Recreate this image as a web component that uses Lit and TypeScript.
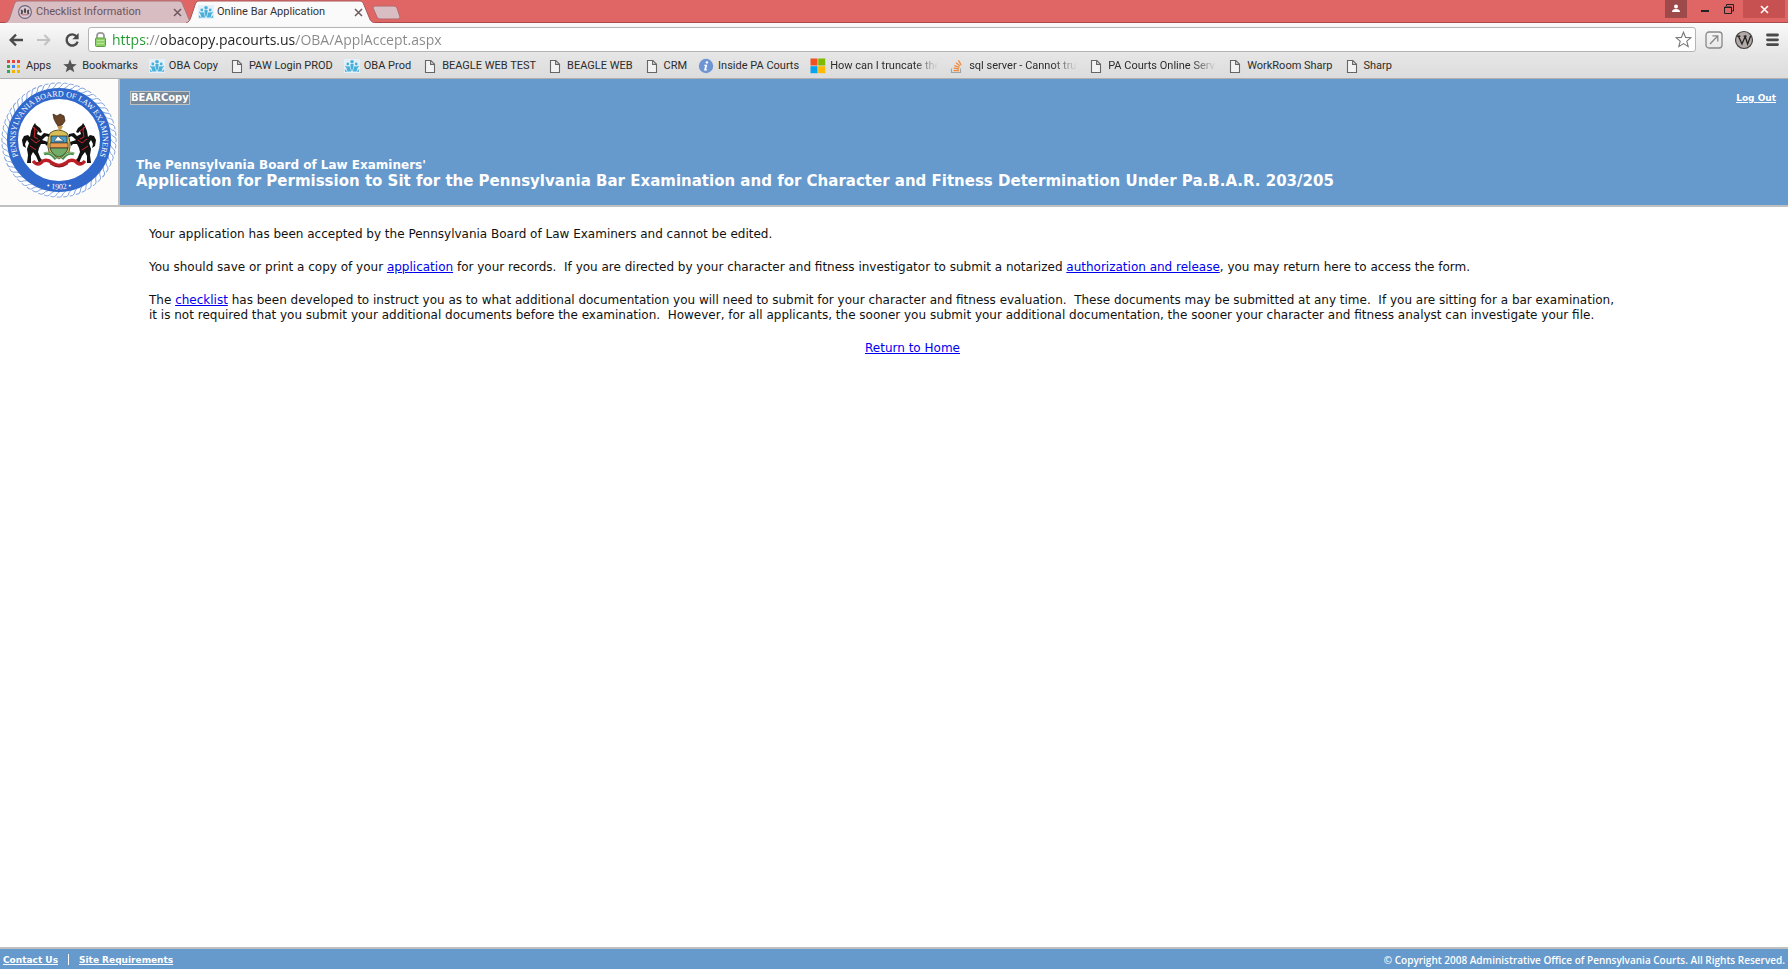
import { LitElement, html, svg, css } from "lit";
import { customElement, property } from "lit/decorators.js";

type IconName = "apps" | "star" | "people" | "doc" | "info" | "ms" | "stack" | "crest";

const people = svg`
  <rect y="1" width="16" height="14" fill="#e4f1f9"/>
  <g fill="#49b0dc">
    <circle cx="8" cy="3.8" r="1.8"/><circle cx="3.8" cy="6" r="1.4"/><circle cx="12.2" cy="6" r="1.4"/>
    <path d="M6.4 6 H9.6 L9.4 9.5 L8 13.6 L6.6 9.5Z"/>
    <path d="M.6 7.6 L3 8.4 L5.6 8.2 L7.2 13.6 H3.4 L2.6 10.6Z M15.4 7.6 L13 8.4 L10.4 8.2 L8.8 13.6 H12.6 L13.4 10.6Z"/>
    <path d="M.8 11 L3.4 13.8 H1Z M15.2 11 L12.6 13.8 H15Z"/>
  </g>`;

const dots = ["#e8453c", "#e8453c", "#e8453c", "#30a852", "#4285f4", "#f5b400", "#30a852", "#f5b400", "#f5b400"];

const icons: Record<IconName, unknown> = {
  apps: dots.map((c, i) => svg`<rect x=${1 + (i % 3) * 5} y=${2 + Math.floor(i / 3) * 5} width="3" height="3" fill=${c}/>`),
  star: svg`<path fill="#555" d="M8 1.2 L9.8 6 L14.8 6.2 L10.9 9.3 L12.3 14.2 L8 11.4 L3.7 14.2 L5.1 9.3 L1.2 6.2 L6.2 6Z"/>`,
  people,
  doc: svg`<path fill="#f3f3f3" stroke="#666" stroke-width="1.1" d="M3.5 2.5 H8.8 L12.5 6.2 V14.5 H3.5Z"/><path fill="none" stroke="#666" stroke-width="1.1" d="M8.6 2.5 V6.4 H12.5"/>`,
  info: svg`<circle cx="8" cy="8" r="7.2" fill="#6e94d4"/><circle cx="8.9" cy="4.4" r="1.2" fill="#fff"/><path fill="#fff" d="M6.2 6.8 H9.3 L8.1 11.6 L9.3 11.4 L9 12.4 H6 L7.2 7.8 H6Z"/>`,
  ms: svg`<rect x=".5" y=".5" width="7" height="7" fill="#f25022"/><rect x="8.2" y=".5" width="7" height="7" fill="#7fba00"/><rect x=".5" y="8.2" width="7" height="7" fill="#00a4ef"/><rect x="8.2" y="8.2" width="7" height="7" fill="#ffb900"/>`,
  stack: svg`<path fill="none" stroke="#9aa5ad" stroke-width="1.1" d="M2.5 10.5 V14.5 H11.5 V10.5"/><path fill="none" stroke="#f08a3c" stroke-width="1.3" d="M4.5 12.6 H10 M4.6 10.2 L10 11 M5.3 7.6 L10.4 9.4 M7 4.8 L11.2 8 M9.4 2.4 L12.2 7"/>`,
  crest: svg`<circle cx="8" cy="8" r="6.4" fill="#dccbd0" stroke="#6a6580" stroke-width="1.1"/><g fill="#54464f"><path d="M3.6 5.6 L5.6 6 L6 8 L5.4 10.4 L3.6 10 L4.2 8Z M12.4 5.6 L10.4 6 L10 8 L10.6 10.4 L12.4 10 L11.8 8Z"/><path d="M7 4.4 H9 L9.2 8 L8 9.4 L6.8 8Z"/></g><path stroke="#b0606c" stroke-width=".9" d="M5 10.8 H11"/>`,
};

@customElement("site-icon")
export class SiteIcon extends LitElement {
  @property() name: IconName = "doc";
  static styles = css`
    :host { display: block; flex: none; width: 16px; height: 16px; }
    svg { display: block; }
  `;
  render() {
    return html`<svg width="16" height="16" viewBox="0 0 16 16" aria-hidden="true">${icons[this.name]}</svg>`;
  }
}

@customElement("browser-tab")
export class BrowserTab extends LitElement {
  @property() label = "";
  @property() icon: IconName = "doc";
  @property({ type: Boolean, reflect: true }) active = false;
  static styles = css`
    :host { display: block; position: relative; width: 184px; height: 23px; margin-right: -3px; color: #6b5559; }
    :host([active]) { z-index: 1; color: #333; }
    .shape { position: absolute; inset: 0 -5px 0 0; width: 189px; height: 23px; fill: #d8bdc3; stroke: #a8747a; }
    :host([active]) .shape { fill: #fafafa; stroke: #a8585a; }
    .row { position: relative; display: flex; align-items: center; gap: 3px; height: 23px; padding: 1px 7px 0 12px; box-sizing: border-box; }
    .label { flex: 1; border: 0; padding: 0; background: none; color: inherit; font: 11px/16px Roboto, sans-serif; text-align: left; white-space: nowrap; }
    .close { display: flex; border: 0; padding: 0; background: none; color: #6e5a5e; }
  `;
  render() {
    return html`
      <svg class="shape" viewBox="0 0 189 23" aria-hidden="true"><path d="M0 23 C3 22 4 20 5 17 L9 5 C10 2 11 1 13 1 H174 C176 1 177 2 178 5 L183 17 C184 20 185 22 189 23"/></svg>
      <div class="row">
        <site-icon name=${this.icon}></site-icon>
        <button class="label">${this.label}</button>
        <button class="close" aria-label="Close tab"><svg width="9" height="9" viewBox="0 0 9 9"><path d="M1 1 L8 8 M8 1 L1 8" stroke="currentColor" stroke-width="1.5"/></svg></button>
      </div>`;
  }
}

const bookmarks: [IconName, string][] = [
  ["apps", "Apps"], ["star", "Bookmarks"], ["people", "OBA Copy"], ["doc", "PAW Login PROD"], ["people", "OBA Prod"],
  ["doc", "BEAGLE WEB TEST"], ["doc", "BEAGLE WEB"], ["doc", "CRM"], ["info", "Inside PA Courts"],
  ["ms", "How can I truncate the"], ["stack", "sql server - Cannot tru"], ["doc", "PA Courts Online Serv"],
  ["doc", "WorkRoom Sharp"], ["doc", "Sharp"],
];

@customElement("browser-chrome")
export class BrowserChrome extends LitElement {
  static styles = css`
    :host { display: block; font: 11px/16px Roboto, sans-serif; }
    button { border: 0; padding: 0; background: none; display: flex; align-items: center; justify-content: center; }
    .titlebar { display: flex; height: 23px; padding-left: 5px; background: linear-gradient(#e06666 22px, #a94a4c 22px); }
    .newtab { align-self: flex-start; margin: 5px 0 0 5px; }
    .window { display: flex; margin-left: auto; padding-right: 3px; height: 18px; }
    .window button { height: 18px; width: 24px; }
    .window .user { width: 22px; background: #9e4a4b; margin-right: 6px; }
    .window .exit { width: 42px; background: #c75050; margin-left: 2px; }
    .toolbar { display: flex; align-items: center; height: 30px; padding: 3px 8px 0; box-sizing: border-box; background: linear-gradient(#fafafa, #e6e6e6); }
    .nav { display: flex; gap: 12px; flex: none; }
    .address { flex: 1; display: flex; align-items: center; gap: 4px; min-width: 0; height: 25px; margin: 0 9px 0 8px; padding: 0 3px 0 4px; box-sizing: border-box; border: 1px solid #b4b4b4; border-radius: 3px; background: #fff; }
    .url {
      flex: 1; min-width: 0; border: 0; outline: 0; padding: 0; height: 21px; font: 14px/21px "Open Sans", sans-serif; color: transparent;
      background: linear-gradient(90deg, #1c9a2c 34px, #888 34px 49px, #222 49px 184px, #888 184px); background-clip: text; -webkit-background-clip: text;
    }
    .tools { display: flex; align-items: center; gap: 11px; flex: none; }
    .bar { background: linear-gradient(#e6e6e6, #dcdcdc); }
    .bookmarks { display: flex; gap: 11px; height: 25px; align-items: center; padding-left: 6px; }
    .bookmark { display: flex; align-items: center; gap: 4px; color: #2c2c2c; text-decoration: none; }
    .text { white-space: nowrap; }
    .fade { width: 108px; -webkit-mask-image: linear-gradient(90deg, #000 84px, transparent 108px); mask-image: linear-gradient(90deg, #000 84px, transparent 108px); }
  `;
  render() {
    return html`
      <div class="titlebar">
        <browser-tab label="Checklist Information" icon="crest"></browser-tab>
        <browser-tab label="Online Bar Application" icon="people" active></browser-tab>
        <button class="newtab" aria-label="New tab"><svg width="29" height="15" viewBox="0 0 29 15"><path d="M3 1 H22 Q24 1 25 3 L28 12 Q28 14 26 14 H8 Q6 14 5 12 L1 3 Q1 1 3 1Z" fill="#d8bdc3" stroke="#b5686c"/></svg></button>
        <div class="window">
          <button class="user" aria-label="User"><svg width="10" height="10" viewBox="0 0 10 10" fill="#fff"><circle cx="5" cy="2.4" r="2"/><path d="M1 8 Q1 5 5 5 Q9 5 9 8Z"/></svg></button>
          <button aria-label="Minimize"><svg width="10" height="10" viewBox="0 0 10 10"><rect x="1" y="6" width="8" height="2" fill="#222"/></svg></button>
          <button aria-label="Restore"><svg width="10" height="10" viewBox="0 0 10 10" fill="none" stroke="#222"><path d="M2.5 2 V.5 H9.5 V7 H8"/><path d="M.5 3 H7.5 V9.5 H.5Z M.5 3.5 H7.5"/></svg></button>
          <button class="exit" aria-label="Close"><svg width="9" height="9" viewBox="0 0 9 9"><path d="M1 1 L8 8 M8 1 L1 8" stroke="#fff" stroke-width="1.6"/></svg></button>
        </div>
      </div>
      <div class="toolbar">
        <div class="nav">
          <button aria-label="Back"><svg width="16" height="16" viewBox="0 0 16 16" fill="none" stroke="#4a4a4a" stroke-width="2.3"><path d="M15 8 H3 M8 2.6 L2.6 8 L8 13.4"/></svg></button>
          <button aria-label="Forward"><svg width="16" height="16" viewBox="0 0 16 16" fill="none" stroke="#c2c2c2" stroke-width="2"><path d="M1 8 H13.4 M8.4 3 L13.4 8 L8.4 13"/></svg></button>
          <button aria-label="Reload"><svg width="16" height="16" viewBox="0 0 16 16"><path d="M12.6 4.4 A5.6 5.6 0 1 0 13.6 9.6" fill="none" stroke="#4a4a4a" stroke-width="2.4"/><path d="M14.6 1 V7.2 H8.4Z" fill="#4a4a4a"/></svg></button>
        </div>
        <div class="address">
          <svg width="15" height="17" viewBox="0 0 15 17" aria-hidden="true"><path d="M4 8 V5 Q4 1.8 7.5 1.8 Q11 1.8 11 5 V8" fill="none" stroke="#999" stroke-width="1.8"/><rect x="2.5" y="7" width="10" height="8.5" rx="1" fill="#8fd06a" stroke="#5ba03b"/><path d="M4 9.5 H11 M4 12.5 H11" stroke="#b9e69e"/></svg>
          <input class="url" aria-label="Address" value="https://obacopy.pacourts.us/OBA/ApplAccept.aspx">
          <button aria-label="Bookmark this page"><svg width="17" height="17" viewBox="0 0 17 17"><path d="M8.5 1.2 L10.6 6.4 L16 6.7 L11.8 10.2 L13.2 15.6 L8.5 12.6 L3.8 15.6 L5.2 10.2 L1 6.7 L6.4 6.4Z" fill="#fff" stroke="#777" stroke-width="1.1"/></svg></button>
        </div>
        <div class="tools">
          <button aria-label="Open externally"><svg width="18" height="18" viewBox="0 0 18 18" fill="none" stroke="#888" stroke-width="1.3"><rect x="1" y="1" width="16" height="16" rx="3"/><path d="M5 13 L12.4 5.2 M7.4 4.8 H12.8 V10.4"/></svg></button>
          <button aria-label="Extension"><svg width="20" height="20" viewBox="0 0 20 20"><circle cx="10" cy="10" r="8.5" fill="#b3a9a6" stroke="#444" stroke-width="1.2"/><path d="M3 6.2 H6.4 M9.6 6.2 H12.6 M4.6 6.4 L8 14 L11.2 6.6 L13.6 14 L16.6 6" fill="none" stroke="#222" stroke-width="1.3"/></svg></button>
          <button aria-label="Menu"><svg width="15" height="14" viewBox="0 0 15 14"><path d="M2.5 2 H12.5 M2.5 6.8 H12.5 M2.5 11.6 H12.5" stroke="#4a4a4a" stroke-width="2.8" stroke-linecap="round"/></svg></button>
        </div>
      </div>
      <div class="bar">
        <nav class="bookmarks">
          ${bookmarks.map(([icon, text]) => html`<a class="bookmark" href="#"><site-icon name=${icon}></site-icon><span class="text ${text.length > 20 ? "fade" : ""}">${text}</span></a>`)}
        </nav>
      </div>`;
  }
}

const horse = svg`
  <path fill="#111" d="M33 49 L35 46 L36 48 L40 51 L42 55 L40 56 L38 54 L37 57 L41 59 L44 56 L49 57 L50 60 L48 60 L47 59 L45 60 L42 63 L48 65 L47 69 L45 67 L41 67 L39 71 L38 75 L40 80 L43 86 L39 86 L36 79 L33 75 L31 79 L31 86 L27 86 L28 78 L27 72 L29 66 L27 63 L25 67 L26 71 L23 69 L22 63 L24 59 L28 58 L30 60 L31 54Z"/>
  <path fill="none" stroke="#d2232a" stroke-width="1" d="M34 50 L35 54 L34 60 L38 62 M31 62 L36 66 L40 63 M30 69 L36 73 M33 50 L38 54"/>`;

@customElement("board-seal")
export class BoardSeal extends LitElement {
  static styles = css`
    :host { display: block; }
    svg { display: block; }
    .ring { font: 8px "Liberation Serif", serif; fill: #fff; }
  `;
  render() {
    const strands = Array.from({ length: 56 }, (_, i) => svg`<path d="M58 10.5 Q61 9 62.5 6 Q64 4.4 67.5 5.6" transform="rotate(${i * (360 / 56)} 59 62)"/>`);
    return html`
      <svg width="118" height="126" viewBox="0 1 118 126" role="img" aria-label="Pennsylvania Board of Law Examiners seal">
        <rect y="1" width="118" height="126" fill="#fdfcfb"/>
        <circle cx="59" cy="62" r="57" fill="#fff"/>
        <g fill="none" stroke="#7ea2dc" stroke-width=".9">${strands}</g>
        <circle cx="59" cy="62" r="46.5" fill="none" stroke="#3068cc" stroke-width="11"/>
        <defs>
          <path id="upper" d="M28.1 92.9 A43.7 43.7 0 1 1 89.9 92.9"/>
          <path id="lower" d="M30 102 A49.4 49.4 0 0 0 88 102"/>
        </defs>
        <text class="ring"><textPath href="#upper" startOffset="50%" text-anchor="middle">PENNSYLVANIA BOARD OF LAW EXAMINERS</textPath></text>
        <text class="ring"><textPath href="#lower" startOffset="50%" text-anchor="middle">• 1902 •</textPath></text>
        <g transform="translate(0 -1)">
          ${horse}
          <g transform="translate(118 0) scale(-1 1)">${horse}</g>
          <path fill="#d8bd58" stroke="#3c3a1c" stroke-width=".8" d="M50 56 Q58 50 67 56 Q72 65 69 75 L59 82 L49 75 Q46 65 50 56Z"/>
          <path fill="#4c9dc6" stroke="#222" stroke-width=".7" d="M51 59 H67 V66 H51Z"/>
          <path fill="#fff" stroke="#222" stroke-width=".5" d="M54 64 L58 59 L61 62 L64 64Z"/>
          <path fill="#e99a4c" stroke="#333" stroke-width=".6" d="M50 66 H68 V71 H50Z"/>
          <path fill="#71ad69" stroke="#222" stroke-width=".7" d="M50 71 H68 Q66 78 59 80 Q52 78 50 71Z"/>
          <path fill="#6b4528" stroke="#2c1d10" stroke-width=".7" d="M53 37 L57 39 L60 37 L64 39 L65 44 L62 48 L58 49 L56 46 L54 42Z"/>
          <path fill="#c49a4e" d="M57 49 H63 L61 53 H59Z"/>
          <path fill="none" stroke="#448b49" stroke-width="3" d="M44 77 Q50 74 56 82 M74 77 Q68 74 62 82"/>
          <path fill="none" stroke="#a9cf92" stroke-width=".9" d="M44 76 Q50 74 56 81 M74 76 Q68 74 62 81"/>
          <path fill="none" stroke="#bd1f27" stroke-width="3.4" d="M33 84 Q38 90 43 84 Q48 82 52 86 Q59 91 66 86 Q70 82 75 84 Q80 90 85 84"/>
          <path fill="none" stroke="#5c1114" stroke-width=".7" d="M36 87 L42 82 M82 87 L76 82 M50 87 Q59 93 68 87"/>
        </g>
      </svg>`;
  }
}

@customElement("app-root")
export class AppRoot extends LitElement {
  static styles = css`
    :host { display: flex; flex-direction: column; min-height: 100vh; background: #fff; color: #111; font: 12px/15px "DejaVu Sans", Verdana, sans-serif; }
    .header { display: flex; border-top: 1px solid #b0b0b0; border-bottom: 2px solid #c0c0c0; background: #6699cc; }
    .seal { flex: none; border-right: 2px solid #c0c0c0; }
    .banner { flex: 1; display: flex; flex-direction: column; justify-content: space-between; padding: 12px 12px 16px 10px; color: #fff; font-weight: bold; }
    .top { display: flex; justify-content: space-between; align-items: center; }
    .env { border: 1px solid #c0c0c0; background: #778899; font-size: 10px; line-height: 12px; }
    .small { font-size: 9px; line-height: 12px; font-weight: bold; color: #fff; }
    .titles { padding-left: 6px; }
    .sub, .title { margin: 0; font-size: 12px; line-height: 16px; }
    .title { font-size: 15px; }
    .content { flex: 1; display: flex; flex-direction: column; gap: 18px; padding: 20px 112px 18px 149px; }
    .content p { margin: 0; }
    .content .center { text-align: center; }
    .content a { color: #0000ee; }
    .footer { display: flex; justify-content: space-between; align-items: center; height: 19px; padding: 1px 3px 0; border-top: 2px solid #c0c0c0; background: #6699cc; }
    .links { display: flex; align-items: center; gap: 10px; }
    .rule { width: 1px; height: 11px; background: #fff; }
    .copy { color: #fff; font: 600 10px/12px "Open Sans", sans-serif; }
  `;
  render() {
    return html`
      <browser-chrome></browser-chrome>
      <header class="header">
        <board-seal class="seal"></board-seal>
        <div class="banner">
          <div class="top"><span class="env">BEARCopy</span><a class="small" href="#">Log Out</a></div>
          <div class="titles">
            <p class="sub">The Pennsylvania Board of Law Examiners'</p>
            <h1 class="title">Application for Permission to Sit for the Pennsylvania Bar Examination and for Character and Fitness Determination Under Pa.B.A.R. 203/205</h1>
          </div>
        </div>
      </header>
      <main class="content">
        <p>Your application has been accepted by the Pennsylvania Board of Law Examiners and cannot be edited.</p>
        <p>You should save or print a copy of your <a href="#">application</a> for your records.&nbsp; If you are directed by your character and fitness investigator to submit a notarized <a href="#">authorization and release</a>, you may return here to access the form.</p>
        <p>The <a href="#">checklist</a> has been developed to instruct you as to what additional documentation you will need to submit for your character and fitness evaluation.&nbsp; These documents may be submitted at any time.&nbsp; If you are sitting for a bar examination,<br>it is not required that you submit your additional documents before the examination.&nbsp; However, for all applicants, the sooner you submit your additional documentation, the sooner your character and fitness analyst can investigate your file.</p>
        <p class="center"><a href="#">Return to Home</a></p>
      </main>
      <footer class="footer">
        <nav class="links"><a class="small" href="#">Contact Us</a><span class="rule"></span><a class="small" href="#">Site Requirements</a></nav>
        <span class="copy">© Copyright 2008 Administrative Office of Pennsylvania Courts. All Rights Reserved.</span>
      </footer>`;
  }
}
